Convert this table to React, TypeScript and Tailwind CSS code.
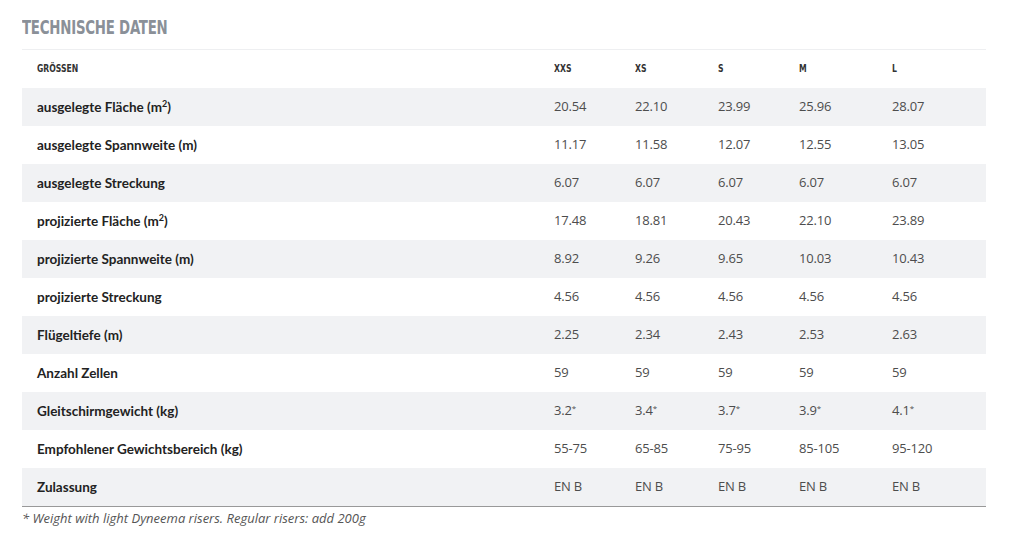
import React from "react";

const sizes = ["XXS", "XS", "S", "M", "L"];

const Sup2 = () => <sup className="text-[9px] -top-[5px]">2</sup>;

const rows: { label: React.ReactNode; values: string[] }[] = [
  { label: <>ausgelegte Fläche (m<Sup2 />)</>, values: ["20.54", "22.10", "23.99", "25.96", "28.07"] },
  { label: "ausgelegte Spannweite (m)", values: ["11.17", "11.58", "12.07", "12.55", "13.05"] },
  { label: "ausgelegte Streckung", values: ["6.07", "6.07", "6.07", "6.07", "6.07"] },
  { label: <>projizierte Fläche (m<Sup2 />)</>, values: ["17.48", "18.81", "20.43", "22.10", "23.89"] },
  { label: "projizierte Spannweite (m)", values: ["8.92", "9.26", "9.65", "10.03", "10.43"] },
  { label: "projizierte Streckung", values: ["4.56", "4.56", "4.56", "4.56", "4.56"] },
  { label: "Flügeltiefe (m)", values: ["2.25", "2.34", "2.43", "2.53", "2.63"] },
  { label: "Anzahl Zellen", values: ["59", "59", "59", "59", "59"] },
  { label: "Gleitschirmgewicht (kg)", values: ["3.2*", "3.4*", "3.7*", "3.9*", "4.1*"] },
  { label: "Empfohlener Gewichtsbereich (kg)", values: ["55-75", "65-85", "75-95", "85-105", "95-120"] },
  { label: "Zulassung", values: ["EN B", "EN B", "EN B", "EN B", "EN B"] },
];

const grid = "grid grid-cols-[517px_81px_83px_81px_93px_109px] items-center h-[38px]";
const body = { fontFamily: '"Open Sans", "Liberation Sans", sans-serif' };
const labelFont = { fontFamily: 'Lato, "Open Sans", sans-serif' };
const cond = { fontFamily: '"DejaVu Sans Condensed", "DejaVu Sans", sans-serif', fontStretch: "condensed" as const };

export default function App() {
  return (
    <div className="w-[1024px] h-[548px] bg-white px-[22px] pt-[14px]" style={body}>
      <div className="h-[35px] flex items-start">
        <h2
          className="inline-block text-[19.5px] font-bold text-[#8a9098] leading-[26px] mt-[1px] tracking-[-0.3px] origin-left scale-x-[0.76] whitespace-nowrap"
          style={cond}
        >
          TECHNISCHE DATEN
        </h2>
      </div>
      <div className="w-[964px] border-t border-[#eeeff1]">
        <div className={grid}>
          {["GRÖSSEN", ...sizes].map((s) => (
            <div key={s} className="pl-[15px] flex items-center leading-none">
              <span
                className="inline-block text-[11px] leading-[12px] font-bold text-[#333] origin-left scale-x-[0.78] whitespace-nowrap"
                style={cond}
              >
                {s}
              </span>
            </div>
          ))}
        </div>
        {rows.map((r, i) => (
          <div key={i} className={`${grid} ${i % 2 === 0 ? "bg-[#f1f2f4]" : "bg-white"}`}>
            <div className="pl-[15px] text-[13.5px] font-bold text-[#222]" style={labelFont}>
              {r.label}
            </div>
            {r.values.map((v, j) => (
              <div key={j} className="pl-[15px] text-[13px] text-[#4d4d4d] tracking-[-0.2px]">
                {v.endsWith("*") ? (
                  <>
                    {v.slice(0, -1)}
                    <sup className="text-[8px] -top-[4px]">*</sup>
                  </>
                ) : (
                  v
                )}
              </div>
            ))}
          </div>
        ))}
        <div className="border-t border-[#999]" />
      </div>
      <p className="text-[13px] italic text-[#555] mt-[2px] leading-[18px]">
        * Weight with light Dyneema risers. Regular risers: add 200g
      </p>
    </div>
  );
}
